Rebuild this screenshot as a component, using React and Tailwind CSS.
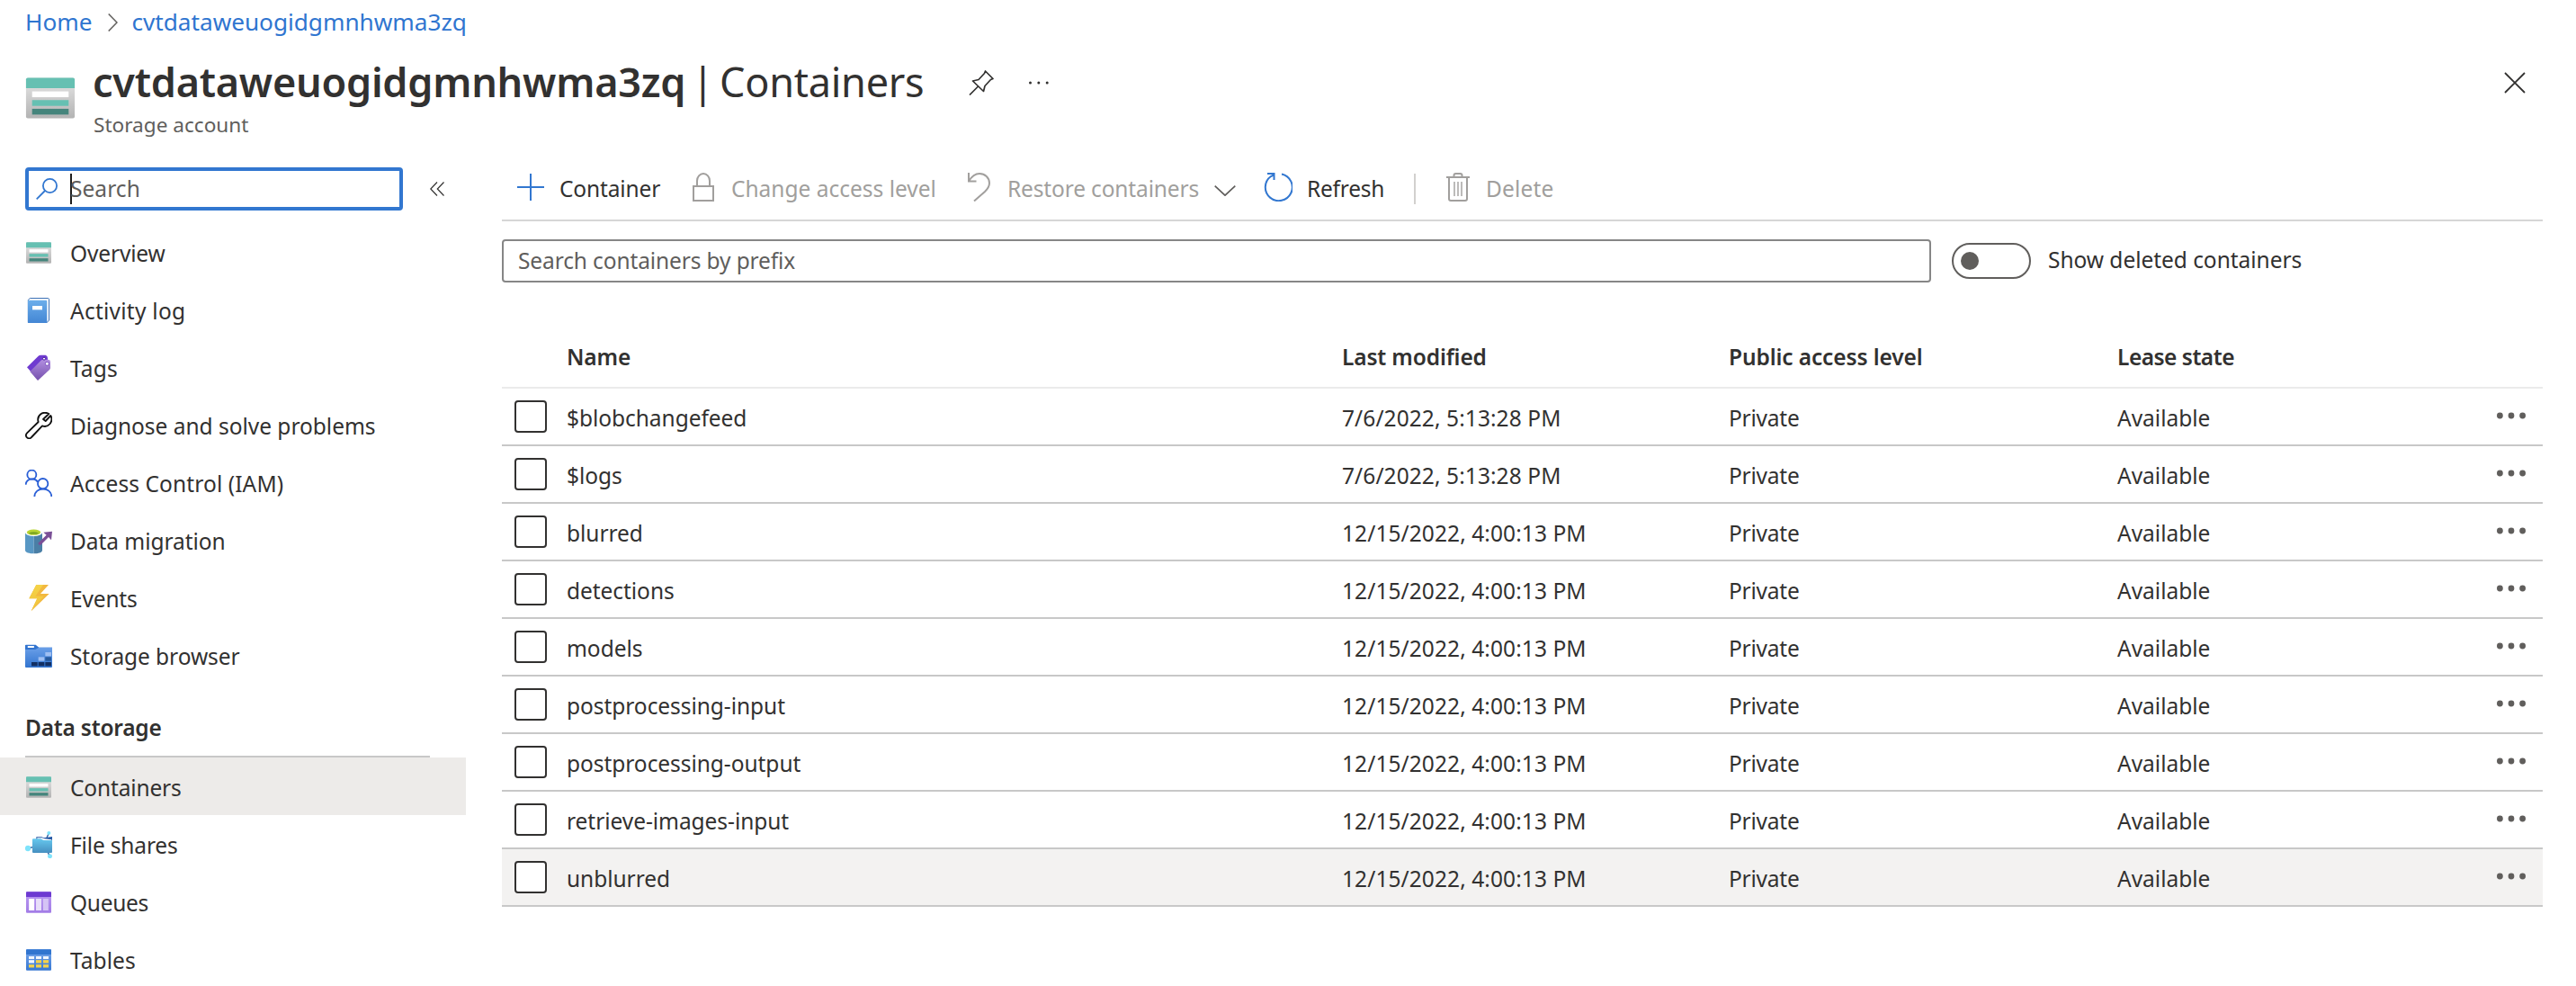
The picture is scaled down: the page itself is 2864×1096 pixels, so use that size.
import React from "react";

function StorageIcon({ className }) {
  return (
    <svg viewBox="0 0 90 90" className={className}>
      <defs>
        <linearGradient id="storageBody" x1="0" y1="0" x2="0" y2="1">
          <stop offset="0" stopColor="#e6e6e6" />
          <stop offset="1" stopColor="#b3b3b3" />
        </linearGradient>
      </defs>
      <rect x="3" y="10" width="84" height="70" rx="3" fill="url(#storageBody)" />
      <path d="M6 10H84a3 3 0 0 1 3 3V28H3V13a3 3 0 0 1 3-3Z" fill="#66c0b2" />
      <rect x="13.5" y="33.5" width="63" height="10" fill="#fff" />
      <rect x="13.5" y="48.5" width="63" height="10" fill="#66c0b2" />
      <rect x="13.5" y="63.5" width="63" height="10" fill="#45857c" />
    </svg>
  );
}

function BookIcon({ className }) {
  return (
    <svg viewBox="0 0 90 90" className={className}>
      <defs>
        <linearGradient id="bookCover" x1="0" y1="0" x2="0" y2="1">
          <stop offset="0" stopColor="#6caeeb" />
          <stop offset="1" stopColor="#4386d4" />
        </linearGradient>
      </defs>
      <path d="M16 4.500H76a3.500 3.500 0 0 1 3.500 3.500V78l-7 7.500H10V10Z" fill="#fff" stroke="#3a6fb5" strokeWidth="3" />
      <path d="M9 11H69a4 4 0 0 1 4 4V87H12a3 3 0 0 1-3-3Z" fill="url(#bookCover)" />
      <rect x="24" y="30" width="33" height="13" fill="#fff" />
    </svg>
  );
}

function TagIcon({ className }) {
  return (
    <svg viewBox="0 0 90 90" className={className}>
      <defs>
        <linearGradient id="tagFront" x1="0" y1="0" x2="0" y2="1">
          <stop offset="0" stopColor="#b28fe0" />
          <stop offset="1" stopColor="#7550ad" />
        </linearGradient>
      </defs>
      <path d="M6 43 44 5Q47 2 52 2H68Q75 5 75 12V20L18 56Z" fill="#6f3bd0" />
      <path d="M16 57 54 19Q57 17 61 17H78Q84 18 84 25V44Q84 48 81 51L42 87Z" fill="url(#tagFront)" />
      <circle cx="73" cy="31" r="6" fill="#fff" stroke="#7a4fc0" strokeWidth="3" />
      <circle cx="63" cy="14" r="4.500" fill="#fff" stroke="#4b1f9e" strokeWidth="3" />
    </svg>
  );
}

function WrenchIcon({ className }) {
  return (
    <svg viewBox="0 0 90 90" className={className} fill="none" stroke="#111" strokeWidth="5.500" strokeLinejoin="round">
      <path d="M79 6C70 1 60 1 52 7C43 14 41 24 44 33L6 70C1 75 2 82 6 85C10 89 17 89 21 84L57 46C67 50 77 46 83 39C89 31 90 21 85 12L68 30L60 24Z" />
    </svg>
  );
}

function PeopleIcon({ className }) {
  return (
    <svg viewBox="0 0 90 90" className={className} fill="none" stroke="#2a5fd6" strokeWidth="5.500">
      <circle cx="22" cy="17" r="15" />
      <path d="M2 50C3 28 34 26 42 42" />
      <circle cx="59" cy="47" r="17" />
      <path d="M31 90C32 56 87 56 88 90" />
    </svg>
  );
}

function MigrationIcon({ className }) {
  return (
    <svg viewBox="0 0 90 90" className={className}>
      <path d="M0 18V77C0 84 14 88 29 88V18Z" fill="#5897c4" />
      <path d="M29 18V88C44 88 57 84 57 77V18Z" fill="#4a7fa6" />
      <ellipse cx="28.500" cy="18" rx="28.500" ry="12" fill="#fff" />
      <ellipse cx="28.500" cy="17" rx="23" ry="9.500" fill="#b8d432" />
      <path d="M11 20Q28 12 46 20Q28 27 11 20Z" fill="#7aa321" />
      <path d="M43 53 71 26 61 17 90 14 87 43 78 33 51 60Q44 60 43 53Z" fill="#7a4f96" />
    </svg>
  );
}

function BoltIcon({ className }) {
  return (
    <svg viewBox="0 0 90 90" className={className}>
      <defs>
        <linearGradient id="bolt" x1="0" y1="0" x2="0" y2="1">
          <stop offset="0" stopColor="#f5d348" />
          <stop offset="1" stopColor="#f0c23a" />
        </linearGradient>
      </defs>
      <path d="M37 0H78L51 30H80L20 88 40 46H13Z" fill="#f2b83f" />
      <path d="M37 0H60L34 38H62L20 88 40 46H13Z" fill="url(#bolt)" />
    </svg>
  );
}

function FolderIcon({ className }) {
  return (
    <svg viewBox="0 0 90 90" className={className}>
      <defs>
        <linearGradient id="folderBody" x1="0" y1="0" x2="0" y2="1">
          <stop offset="0" stopColor="#6a9fe8" />
          <stop offset="1" stopColor="#3274cf" />
        </linearGradient>
      </defs>
      <path d="M0 10Q0 8 3 8H35L46 17H90V24H0Z" fill="#3274cf" />
      <path d="M0 24H34L46 17H90V81Q90 84 87 84H3Q0 84 0 81Z" fill="url(#folderBody)" />
      <rect x="8" y="12" width="22" height="6" rx="2" fill="#fff" />
      <rect x="67" y="33" width="20" height="13" fill="#9fbff2" />
      <rect x="44" y="49" width="20" height="13" fill="#9fbff2" />
      <rect x="67" y="49" width="20" height="13" fill="#265a9e" />
      <rect x="21" y="66" width="20" height="13" fill="#132f62" />
      <rect x="44" y="66" width="20" height="13" fill="#132f62" />
      <rect x="67" y="66" width="20" height="13" fill="#132f62" />
    </svg>
  );
}

function FileShareIcon({ className }) {
  return (
    <svg viewBox="0 0 90 90" className={className}>
      <defs>
        <linearGradient id="shareFolder" x1="0" y1="0" x2="0" y2="1">
          <stop offset="0" stopColor="#66c8ee" />
          <stop offset="1" stopColor="#468fc0" />
        </linearGradient>
      </defs>
      <path d="M79 6 72 22M9 57 28 52M74 68 82 82" stroke="#2c5d9e" strokeWidth="4" fill="none" />
      <path d="M37 19H55L62 22 90 18V40H37Z" fill="#2559a5" />
      <path d="M40 22H56L64 25 88 28V44H40Z" fill="#fff" />
      <path d="M24 28Q24 25 27 25H52L61 30H90V69Q90 72 87 72H27Q24 72 24 69Z" fill="url(#shareFolder)" />
      <circle cx="9" cy="57" r="9.500" fill="#7fe3fb" />
      <circle cx="79" cy="6" r="6" fill="#7fe3fb" />
      <circle cx="82.500" cy="83" r="7.500" fill="#7fe3fb" />
    </svg>
  );
}

function QueueIcon({ className }) {
  return (
    <svg viewBox="0 0 90 90" className={className}>
      <defs>
        <linearGradient id="queueBody" x1="0" y1="0" x2="0" y2="1">
          <stop offset="0" stopColor="#bb9bf2" />
          <stop offset="1" stopColor="#a27be6" />
        </linearGradient>
      </defs>
      <rect x="3" y="10" width="84" height="70" rx="3" fill="url(#queueBody)" />
      <path d="M6 10H84a3 3 0 0 1 3 3V27H3V13a3 3 0 0 1 3-3Z" fill="#6d3ad1" />
      <rect x="12.500" y="33" width="18" height="39" fill="#fff" />
      <rect x="36" y="33" width="18" height="39" fill="#e8dff9" />
      <rect x="59.500" y="33" width="18" height="39" fill="#d5c4f5" />
    </svg>
  );
}

function TableIcon({ className }) {
  const rows = [[33, 9], [45.5, 10], [60.5, 10]];
  return (
    <svg viewBox="0 0 90 90" className={className}>
      <defs>
        <linearGradient id="tableBody" x1="0" y1="0" x2="0" y2="1">
          <stop offset="0" stopColor="#79a8ec" />
          <stop offset="1" stopColor="#3677d2" />
        </linearGradient>
      </defs>
      <rect x="3" y="10" width="84" height="70" rx="3" fill="url(#tableBody)" />
      <path d="M6 10H84a3 3 0 0 1 3 3V27H3V13a3 3 0 0 1 3-3Z" fill="#3175cf" />
      {rows.map(([y, h], r) =>
        [12, 36, 60].map((x, c) => (
          <rect key={`${r}-${c}`} x={x} y={y} width="18" height={h} fill={r === 0 || (r === 1 && c === 0) ? "#f0f5fd" : "#f5d24a"} />
        ))
      )}
    </svg>
  );
}

const menu = [
  ["Overview", StorageIcon, "tracking-[-0.16px]"],
  ["Activity log", BookIcon, "tracking-[0.25px]"],
  ["Tags", TagIcon, "tracking-[0.17px]"],
  ["Diagnose and solve problems", WrenchIcon, "tracking-[-0.02px]"],
  ["Access Control (IAM)", PeopleIcon, "tracking-[0.1px]"],
  ["Data migration", MigrationIcon, "tracking-[-0.05px]"],
  ["Events", BoltIcon, "tracking-[-0.17px]"],
  ["Storage browser", FolderIcon, "tracking-[-0.08px]"],
];

const dataMenu = [
  ["Containers", StorageIcon, "tracking-[-0.16px]"],
  ["File shares", FileShareIcon, "tracking-[-0.16px]"],
  ["Queues", QueueIcon, "tracking-[-0.31px]"],
  ["Tables", TableIcon, "tracking-[0.08px]"],
];

const containers = [
  ["$blobchangefeed", "7/6/2022, 5:13:28 PM"],
  ["$logs", "7/6/2022, 5:13:28 PM"],
  ["blurred", "12/15/2022, 4:00:13 PM"],
  ["detections", "12/15/2022, 4:00:13 PM"],
  ["models", "12/15/2022, 4:00:13 PM"],
  ["postprocessing-input", "12/15/2022, 4:00:13 PM"],
  ["postprocessing-output", "12/15/2022, 4:00:13 PM"],
  ["retrieve-images-input", "12/15/2022, 4:00:13 PM"],
  ["unblurred", "12/15/2022, 4:00:13 PM"],
];

function MenuItem({ label, Icon, tracking, selected }) {
  return (
    <div className={`flex h-16 w-[518px] shrink-0 items-center pt-0.5 pl-7 ${selected ? "bg-[#edebe9]" : ""}`}>
      <Icon className="h-[30px] w-[30px] shrink-0" />
      <span className={`ml-5 pt-px ${tracking}`}>{label}</span>
    </div>
  );
}

function Breadcrumb() {
  return (
    <nav className="flex h-[50px] items-center pb-0.5 pl-[28px] text-[26.2px] text-[#2f75d0]">
      <a>Home</a>
      <svg viewBox="0 0 11 20" className="mt-0.5 ml-[17px] h-5 w-[11px]" fill="none" stroke="#605e5c" strokeWidth="1.5">
        <path d="M.7.500 10 10 .7 19.500" />
      </svg>
      <a className="ml-4 tracking-[-0.02px]">cvtdataweuogidgmnhwma3zq</a>
    </nav>
  );
}

function Header() {
  return (
    <header className="flex h-[136px] items-start pl-[27px]">
      <StorageIcon className="mt-[30px] h-[58px] w-[58px]" />
      <div className="ml-[18px] pt-[10px]">
        <h1 className="flex text-[45px] leading-[61px] whitespace-pre">
          <span className="w-[666px] font-semibold tracking-[-0.25px]">cvtdataweuogidgmnhwma3zq</span>
          <span className="w-[31px]">|</span>
          <span className="w-[227px] tracking-[-0.25px]">Containers</span>
        </h1>
        <p className="pl-px text-[22.6px] leading-9 text-[#605e5c]">Storage account</p>
      </div>
      <svg viewBox="0 0 28 28" className="mt-7 ml-[50px] h-7 w-7" fill="none" stroke="#323130" strokeWidth="1.7" strokeLinejoin="round">
        <path d="M18.500 1 27 9.500 24.500 10.500 18 17.500 16.500 23.500 4.500 12 11 10.500 17.500 3.500ZM10.500 18 1 27.500" />
      </svg>
      <svg viewBox="0 0 24 4" className="mt-10 ml-[38px] h-1 w-6" fill="#323130">
        <circle cx="2.500" cy="2" r="1.500" />
        <circle cx="11.800" cy="2" r="1.500" />
        <circle cx="21.200" cy="2" r="1.500" />
      </svg>
      <svg viewBox="0 0 24 24" className="mt-[30px] mr-14 ml-auto h-6 w-6" stroke="#323130" strokeWidth="1.8">
        <path d="M1 1 23 23M23 1 1 23" />
      </svg>
    </header>
  );
}

function Sidebar() {
  return (
    <aside className="flex w-[558px] shrink-0 flex-col">
      <div className="flex items-center pl-7">
        <div className="flex h-12 w-[420px] items-center rounded border-4 border-[#3277d0] pl-2">
          <svg viewBox="0 0 24 24" className="h-6 w-6" fill="none" stroke="#3277d0" strokeWidth="1.8">
            <circle cx="15.500" cy="8.500" r="7.600" />
            <path d="M10 14 .700 23.300" />
          </svg>
          <span className="ml-3.5 h-[34px] w-0.5 bg-[#201f1e]" />
          <span className="-ml-0.5 tracking-[0.05px] text-[#605e5c]">Search</span>
        </div>
        <svg viewBox="0 0 16 16" className="ml-[30px] h-4 w-4" fill="none" stroke="#323130" strokeWidth="1.200">
          <path d="M8 .500.800 8 8 15.500M15.500.500 8.300 8 15.500 15.500" />
        </svg>
      </div>
      <div className="mt-3.5 flex flex-col">
        {menu.map(([label, Icon, tracking]) => (
          <MenuItem key={label} label={label} Icon={Icon} tracking={tracking} />
        ))}
      </div>
      <h2 className="ml-7 flex h-[82px] w-[450px] shrink-0 items-center border-b-2 border-[#c8c8c8] pt-[17px] font-semibold tracking-[-0.22px]">
        Data storage
      </h2>
      {dataMenu.map(([label, Icon, tracking]) => (
        <MenuItem key={label} label={label} Icon={Icon} tracking={tracking} selected={label === "Containers"} />
      ))}
    </aside>
  );
}

function Toolbar() {
  return (
    <div className="flex h-[60px] items-center border-b-2 border-[#d6d6d6] pb-[10px] text-[#a19f9d]">
      <svg viewBox="0 0 30 30" className="mb-1 ml-[17px] h-[30px] w-[30px]" stroke="#3277d0" strokeWidth="2">
        <path d="M15 0V30M0 15H30" />
      </svg>
      <span className="ml-[17px] w-[148px] tracking-[-0.14px] text-[#323130]">Container</span>
      <svg viewBox="0 0 24 32" className="mb-1 h-8 w-6" fill="none" stroke="currentColor" strokeWidth="2">
        <path d="M1 15H23V31H1ZM5 15V9A7 8 0 0 1 19 9V15" />
      </svg>
      <span className="ml-[19px] w-[263px]">Change access level</span>
      <svg viewBox="0 0 25 32" className="mb-1 h-8 w-[25px]" fill="none" stroke="currentColor" strokeWidth="2">
        <path d="M1 0V9.500H9.500M1 9.500C5 3 9 1 13 1C19 1 24 5.500 24 11.500C24 15 22 18 19 21L7 31.500" />
      </svg>
      <span className="ml-[19px] w-[230px] tracking-[-0.15px]">Restore containers</span>
      <svg viewBox="0 0 24 12" className="mt-1 h-3 w-6" fill="none" stroke="#605e5c" strokeWidth="1.700">
        <path d="M.700.700 12 11.200 23.300.700" />
      </svg>
      <svg viewBox="0 0 32 32" className="mb-1 ml-[31px] h-8 w-8" fill="none" stroke="#3277d0" strokeWidth="2">
        <path d="M20 1.500A15 15 0 1 1 8 4L11 2.500M4 1H11.500V8" />
      </svg>
      <span className="ml-[16px] w-[119px] tracking-[-0.24px] text-[#323130]">Refresh</span>
      <span className="h-[34px] w-0.5 bg-[#d2d0ce]" />
      <svg viewBox="0 0 26 32" className="mb-1 ml-[34px] h-8 w-[26px]" fill="none" stroke="currentColor" strokeWidth="2">
        <path d="M0 5H26M8.500 5V3A2 2 0 0 1 10.500 1H15.500A2 2 0 0 1 17.500 3V5M3 5V29A2 2 0 0 0 5 31H21A2 2 0 0 0 23 29V5" />
        <path d="M9 10V26M13 10V26M17 10V26" strokeWidth="1.400" />
      </svg>
      <span className="ml-[18px] tracking-[0.15px]">Delete</span>
    </div>
  );
}

function ContainerTable() {
  return (
    <div>
      <div className="grid h-[118px] grid-cols-[72px_862px_430px_432px_1fr] items-center border-b-2 border-[#ebebeb] pt-[49px] font-semibold">
        <span />
        <span className="tracking-[-0.1px]">Name</span>
        <span className="tracking-[-0.15px]">Last modified</span>
        <span className="tracking-[-0.12px]">Public access level</span>
        <span className="tracking-[-0.5px]">Lease state</span>
      </div>
      {containers.map(([name, modified]) => (
        <div
          key={name}
          className={`grid h-16 grid-cols-[72px_862px_430px_432px_1fr] items-center border-b-2 border-[#c8c8c8] ${name === "unblurred" ? "bg-[#f3f2f1]" : ""}`}
        >
          <span className="ml-3.5 h-9 w-9 rounded border-2 border-[#323130] bg-white" />
          <span className="pt-[3px] tracking-[-0.05px]">{name}</span>
          <span className={`pt-[3px] ${modified.length > 20 ? "tracking-[0.08px]" : "tracking-[0.08px]"}`}>{modified}</span>
          <span className="pt-[3px] tracking-[-0.22px]">Private</span>
          <div className="flex items-center pr-[19px]">
            <span className="pt-[3px]">Available</span>
            <svg viewBox="0 0 32 8" className="mb-[3px] ml-auto h-2 w-8" fill="#605e5c">
              <circle cx="3.400" cy="4" r="3.400" />
              <circle cx="16" cy="4" r="3.400" />
              <circle cx="28.600" cy="4" r="3.400" />
            </svg>
          </div>
        </div>
      ))}
    </div>
  );
}

export default function App() {
  return (
    <div className="flex h-[1096px] w-full flex-col overflow-hidden bg-white font-['Noto_Sans',sans-serif] text-[24.5px] leading-[34px] whitespace-nowrap text-[#323130]">
      <Breadcrumb />
      <Header />
      <div className="flex min-h-0 flex-1">
        <Sidebar />
        <main className="mr-[37px] flex-1">
          <Toolbar />
          <div className="mt-5 flex h-12 items-center">
            <div className="flex h-12 w-[1589px] items-center rounded border-2 border-[#868686] pl-4 tracking-[-0.12px] text-[#605e5c]">
              Search containers by prefix
            </div>
            <div className="ml-[23px] flex h-10 w-[88px] items-center rounded-full border-2 border-[#605e5c] pl-2">
              <span className="h-5 w-5 rounded-full bg-[#605e5c]" />
            </div>
            <span className="ml-[19px] pb-0.5 tracking-[-0.04px]">Show deleted containers</span>
          </div>
          <ContainerTable />
        </main>
      </div>
    </div>
  );
}
